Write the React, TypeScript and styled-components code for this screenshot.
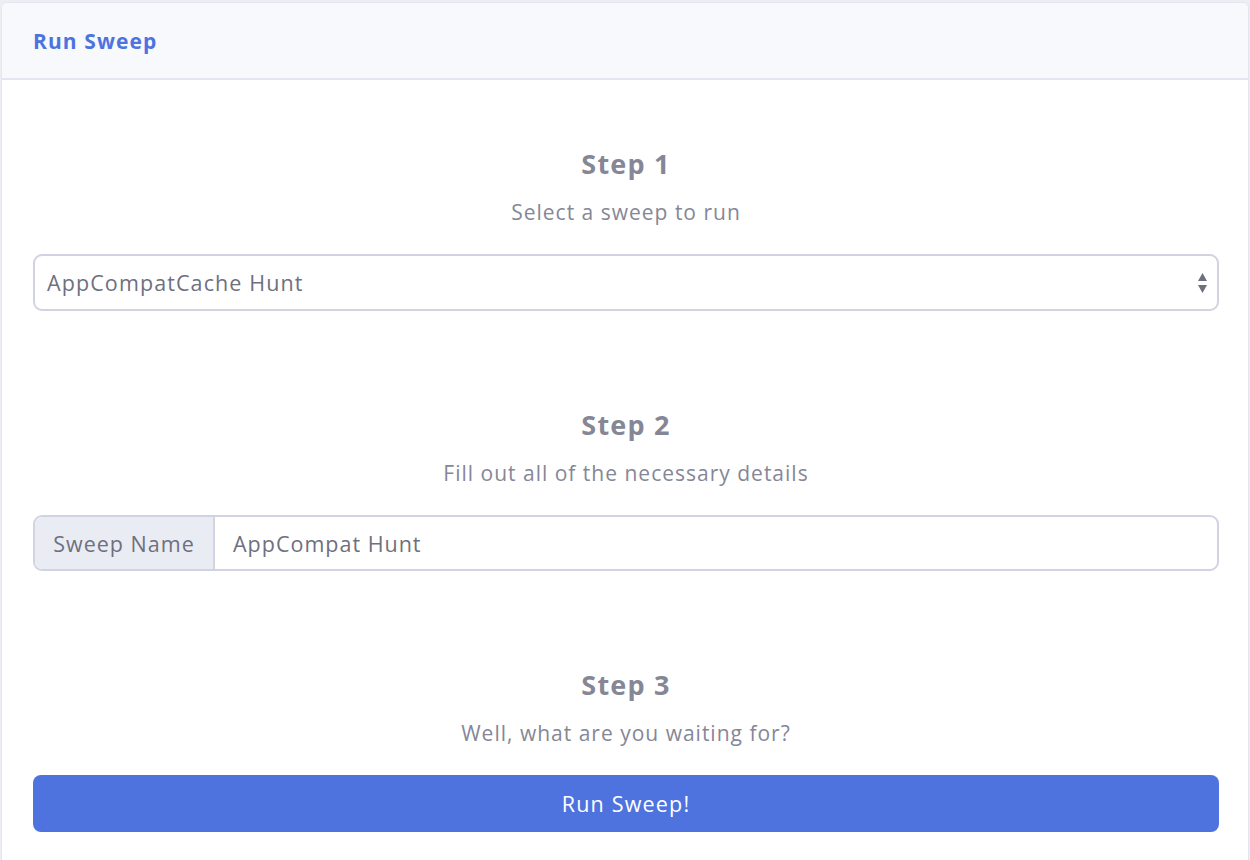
import React from "react";
import styled, { createGlobalStyle } from "styled-components";

const Global = createGlobalStyle`
  html, body { margin: 0; padding: 0; background: #eceef4; }
  body { font-family: "Open Sans", "Noto Sans", "Liberation Sans", sans-serif; }
  * { box-sizing: border-box; }
`;

const Page = styled.div`
  padding: 2px 1px 0 1px;
  height: 860px;
  overflow: hidden;
`;

const Card = styled.div`
  background: #fff;
  border: 1px solid #e3e6f0;
  border-radius: 6px;
  height: 900px;
`;

const CardHeader = styled.div`
  height: 77px;
  background: #f8f9fc;
  border-bottom: 2px solid #e3e6f0;
  border-radius: 6px 6px 0 0;
  display: flex;
  align-items: center;
  padding: 0 31px;
`;

const Title = styled.h6`
  margin: 0;
  font-size: 21px;
  letter-spacing: 1.1px;
  font-weight: 700;
  color: #4e73df;
`;

const CardBody = styled.div`
  padding: 68px 29px 0 31px;
  display: flex;
  flex-direction: column;
  gap: 98px;
`;

const Section = styled.section`
  display: flex;
  flex-direction: column;
`;

const StepTitle = styled.h3`
  margin: 0 0 18px;
  text-align: center;
  font-size: 27px;
  letter-spacing: 1.2px;
  line-height: 31px;
  font-weight: 700;
  color: #858796;
`;

const StepText = styled.p<{ $mb?: number }>`
  margin: 0 0 ${(p) => p.$mb ?? 27}px;
  text-align: center;
  font-size: 21px;
  letter-spacing: 1px;
  line-height: 30px;
  color: #858796;
`;

const SelectBox = styled.div`
  height: 57px;
  border: 2px solid #d1d3e2;
  border-radius: 9px;
  display: flex;
  align-items: center;
  justify-content: space-between;
  padding: 0 9px 0 12px;
  font-size: 21.5px;
  letter-spacing: 1.1px;
  color: #6e707e;
`;

const InputGroup = styled.div`
  height: 56px;
  display: flex;
  border: 2px solid #d1d3e2;
  border-radius: 9px;
  overflow: hidden;
`;

const Prepend = styled.div`
  width: 180px;
  background: #eaecf4;
  border-right: 2px solid #d1d3e2;
  display: flex;
  align-items: center;
  justify-content: center;
  font-size: 21.5px;
  letter-spacing: 1px;
  color: #6e707e;
`;

const InputText = styled.div`
  flex: 1;
  display: flex;
  align-items: center;
  padding-left: 18px;
  font-size: 21.5px;
  letter-spacing: 1px;
  color: #6e707e;
`;

const Button = styled.button`
  height: 57px;
  width: 100%;
  border: none;
  border-radius: 8px;
  background: #4e73df;
  color: #fff;
  font-family: inherit;
  font-size: 21.5px;
  letter-spacing: 1.2px;
  cursor: pointer;
`;

const Arrows = () => (
  <svg width="11" height="23" viewBox="0 0 11 23">
    <path d="M5.5 2 L10 10 L1 10 Z" fill="#6e707e" />
    <path d="M1 14 L10 14 L5.5 22 Z" fill="#6e707e" />
  </svg>
);

export default function App() {
  return (
    <>
      <Global />
      <Page>
        <Card>
          <CardHeader>
            <Title>Run Sweep</Title>
          </CardHeader>
          <CardBody>
            <Section>
              <StepTitle>Step 1</StepTitle>
              <StepText>Select a sweep to run</StepText>
              <SelectBox>
                <span>AppCompatCache Hunt</span>
                <Arrows />
              </SelectBox>
            </Section>
            <Section>
              <StepTitle>Step 2</StepTitle>
              <StepText>Fill out all of the necessary details</StepText>
              <InputGroup>
                <Prepend>Sweep Name</Prepend>
                <InputText>AppCompat Hunt</InputText>
              </InputGroup>
            </Section>
            <Section>
              <StepTitle>Step 3</StepTitle>
              <StepText $mb={27}>Well, what are you waiting for?</StepText>
              <Button>Run Sweep!</Button>
            </Section>
          </CardBody>
        </Card>
      </Page>
    </>
  );
}
